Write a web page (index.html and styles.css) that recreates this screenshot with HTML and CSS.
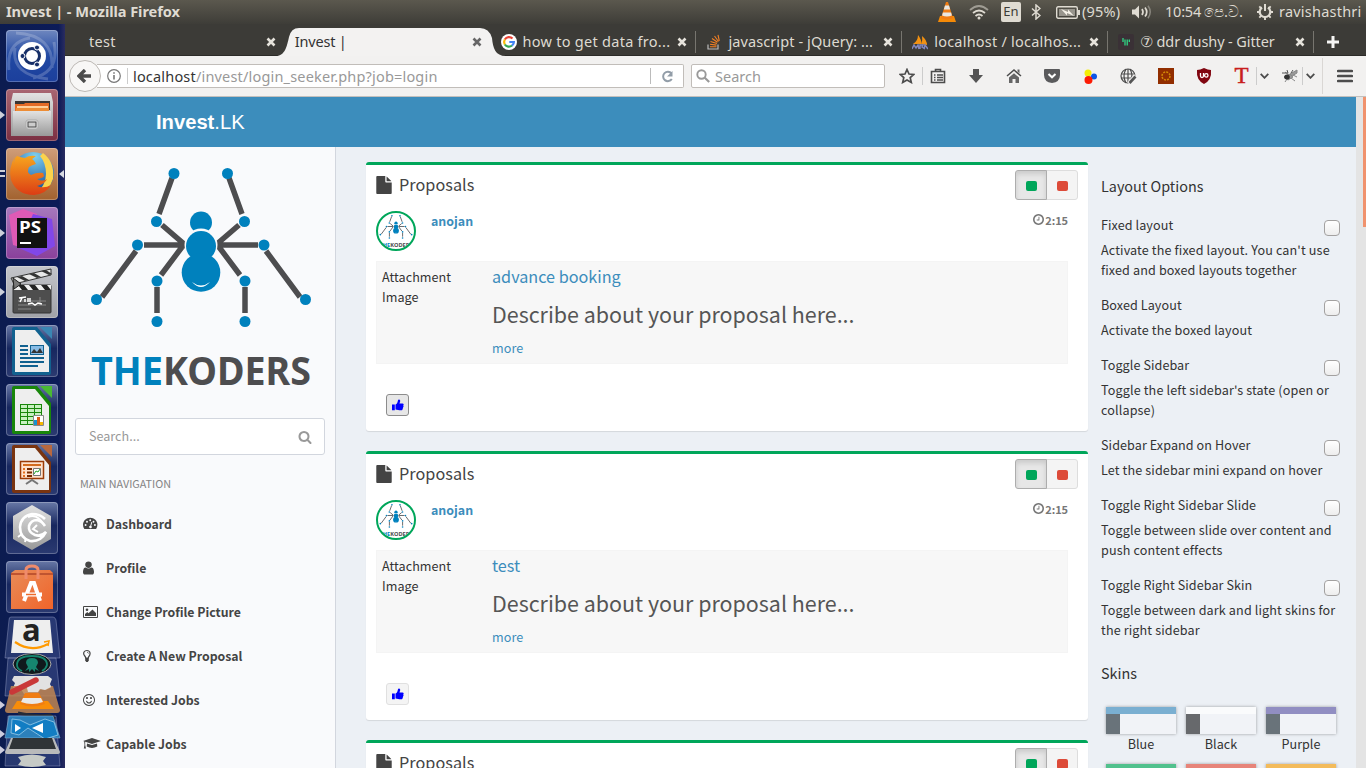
FILE: index.html
```html
<!DOCTYPE html>
<html lang="en">
<head>
<meta charset="utf-8">
<title>Invest |</title>
<link rel="stylesheet" href="styles.css">
</head>
<body>
<svg class="defs" width="0" height="0">
  <defs>
    <symbol id="spider" viewBox="0 0 240 240">
      <g stroke="#4d4d4f" stroke-width="5.500" fill="none">
        <path d="M91 23L78 59M148 23l13 36M81 70l22 19-1 4M158 70l-22 19 1 4M63 90h40M136 90h41M55 96L21 142M185 96l34 46M101 92L80 120M138 92l21 28M76 132v26M164 132v26"/>
      </g>
      <g fill="#0081bd">
        <circle cx="93" cy="18.500" r="5.500"/><circle cx="146.500" cy="18.500" r="5.500"/>
        <circle cx="75.500" cy="66.500" r="5.500"/><circle cx="163.500" cy="66.500" r="5.500"/>
        <circle cx="56.500" cy="90" r="5.500"/><circle cx="183" cy="90" r="5.500"/>
        <circle cx="15.500" cy="144.500" r="5.500"/><circle cx="224.500" cy="144.500" r="5.500"/>
        <circle cx="76" cy="126" r="5.500"/><circle cx="164" cy="126" r="5.500"/>
        <circle cx="76" cy="166.500" r="5.500"/><circle cx="164" cy="166.500" r="5.500"/>
        <circle cx="120" cy="67.500" r="11"/>
      </g>
      <circle cx="120" cy="90" r="16.500" fill="#f9fafc"/>
      <circle cx="120" cy="91" r="15" fill="#0081bd"/><circle cx="120" cy="117.500" r="19.300" fill="#0081bd"/>
      <path d="M111 127q9 7 18 0q-9 10-18 0" fill="#fff"/>
      <text x="10" y="229.500" font-family="'Noto Sans',sans-serif" font-weight="700" font-size="40" textLength="72" lengthAdjust="spacingAndGlyphs" fill="#0081bd">THE</text>
      <text x="82" y="229.500" font-family="'Noto Sans',sans-serif" font-weight="700" font-size="40" textLength="148" lengthAdjust="spacingAndGlyphs" fill="#4d4d4f">KODERS</text>
    </symbol>
    <symbol id="close" viewBox="0 0 10 10"><path d="M1.500 1.500l7 7M8.500 1.500l-7 7" stroke="currentColor" stroke-width="2.600"/></symbol>
    <symbol id="search" viewBox="0 0 1792 1792"><path d="M1216 832q0-185-131.500-316.500t-316.500-131.500-316.500 131.500-131.500 316.500 131.500 316.500 316.500 131.500 316.500-131.500 131.500-316.500zm512 832q0 52-38 90t-90 38q-54 0-90-38l-343-342q-179 124-399 124-143 0-273.500-55.500t-225-150-150-225-55.500-273.500 55.500-273.500 150-225 225-150 273.500-55.500 273.500 55.500 225 150 150 225 55.500 273.500q0 220-124 399l343 343q37 37 37 90z"/></symbol>
    <symbol id="file" viewBox="128 0 1536 1792"><path d="M1152 512v-472q22 14 36 28l408 408q14 14 28 36h-472zm-128 32q0 40 28 68t68 28h544v1056q0 40-28 68t-68 28h-1344q-40 0-68-28t-28-68v-1600q0-40 28-68t68-28h800v544z"/></symbol>
    <symbol id="clock" viewBox="128 128 1536 1536"><path d="M1024 544v448q0 14-9 23t-23 9h-320q-14 0-23-9t-9-23v-64q0-14 9-23t23-9h224v-352q0-14 9-23t23-9h64q14 0 23 9t9 23zm416 352q0-148-73-273t-198-198-273-73-273 73-198 198-73 273 73 273 198 198 273 73 273-73 198-198 73-273zm224 0q0 209-103 385.500t-279.500 279.500-385.500 103-385.500-103-279.500-279.500-103-385.500 103-385.500 279.500-279.500 385.500-103 385.500 103 279.500 279.500 103 385.500z"/></symbol>
    <symbol id="thumb" viewBox="0 0 12 12"><path d="M0 5.500h2.800v5.800H0zM3.500 5.500C5 5 5.700 3 6 1.200 6.200 0 8.200.2 8.200 2c0 1-.6 1.700-.7 2.600h3c1.300 0 1.500 1.400.7 1.900.6.600.4 1.500-.2 1.800.3.700 0 1.300-.5 1.600.2 1-.4 1.400-1.300 1.400-2 .1-3.500-.3-5.700-.8z"/></symbol>
    <linearGradient id="glass" x2="0" y2="1"><stop offset="0" stop-color="#fff" stop-opacity=".42"/><stop offset=".45" stop-color="#fff" stop-opacity=".08"/><stop offset="1" stop-color="#fff" stop-opacity=".16"/></linearGradient>
    <linearGradient id="silver" x2="0" y2="1"><stop offset="0" stop-color="#e2e2e2"/><stop offset="1" stop-color="#999"/></linearGradient>
    <linearGradient id="fox" x2="0" y2="1"><stop offset="0" stop-color="#f7a51e"/><stop offset="1" stop-color="#dc3d14"/></linearGradient>
    <linearGradient id="bag" x2="1" y2="1"><stop offset="0" stop-color="#e98c58"/><stop offset="1" stop-color="#f0642a"/></linearGradient>
    <radialGradient id="globe" cx=".55" cy=".1" r=".9"><stop offset="0" stop-color="#7fd0f0"/><stop offset="1" stop-color="#0b4694"/></radialGradient>
  </defs>
</svg>

<header class="panel">
  <span class="panel-title">Invest | - Mozilla Firefox</span>
  <div class="indicators">
    <svg class="i-vlc" width="18" height="22" viewBox="0 0 18 22"><path d="M2 15h14l2 6H0z" fill="#f58a07"/><path d="M8 1h2l5 16q-6 3-12 0z" fill="#f07c12"/><path d="M7 4.500h4l1.200 4H5.800zM4.900 11.500h8.200l.8 3q-5 2-9.800 0z" fill="#e9e6e0"/></svg>
    <svg class="i-wifi" width="20" height="15" viewBox="0 0 20 15"><g fill="none" stroke="#dfdbd2" stroke-width="1.800"><path d="M1 5q9-8 18 0" opacity=".55"/><path d="M4 8q6-5 12 0M6.500 11q3.500-3 7 0"/></g><circle cx="10" cy="13" r="1.500" fill="#dfdbd2"/></svg>
    <span class="i-en">En</span>
    <svg class="i-bt" width="10" height="16" viewBox="0 0 10 16"><path d="M1 4.500l8 7-4 3.500V1l4 3.500-8 7" fill="none" stroke="#dfdbd2" stroke-width="1.500"/></svg>
    <svg class="i-bat" width="24" height="13" viewBox="0 0 24 13"><rect x=".7" y=".7" width="20.600" height="11.600" rx="1.500" fill="none" stroke="#dfdbd2" stroke-width="1.400"/><path d="M3 3h16v7H3z" fill="#98958d"/><path d="M23 4v5" stroke="#dfdbd2" stroke-width="2"/><path d="M5 3l7 3V3.500L18 10l-7-3v2.500z" fill="#f5f1e8"/></svg>
    <span class="i-pct">(95%)</span>
    <svg class="i-vol" width="20" height="14" viewBox="0 0 20 14"><path d="M0 4.500h3l4-4v13l-4-4H0z" fill="#dfdbd2"/><path d="M10 4q2 3 0 6M13 2.500q3.500 4.500 0 9" fill="none" stroke="#dfdbd2" stroke-width="1.700"/><path d="M16 .8q4.500 6.200 0 12.400" fill="none" stroke="#88857d" stroke-width="1.500"/></svg>
    <span class="i-time">10:54</span><span class="i-ampm" lang="si">පෙ.ව.</span>
    <svg class="i-gear" width="16" height="16" viewBox="0 0 16 16"><g stroke="#dfdbd2" fill="none"><path d="M5 3.500a5.300 5.300 0 1 0 6 0" stroke-width="2.200"/><path d="M8 0v7" stroke-width="2"/><path d="M0 8h3M13 8h3M8 13v3M2.300 2.300l2 2M13.700 2.300l-2 2M2.300 13.700l2-2M13.700 13.700l-2-2" stroke-width="1.900"/></g></svg>
    <span class="i-user">ravishasthri</span>
  </div>
</header>

<div class="desktop">
  <nav class="launcher">
    <div class="tile t-dash"><svg viewBox="0 0 52 52"><path d="M3 40Q0 12 24 8M48 12Q54 42 27 48M10 3q38 2 36 35M42 49Q5 45 9 18" fill="none" stroke="#fff" stroke-width="3" opacity=".2"/><circle cx="26" cy="26" r="14" fill="#fff"/><circle cx="26" cy="26" r="7.500" fill="none" stroke="#172f68" stroke-width="3"/><g fill="#172f68" stroke="#fff"><circle cx="16.500" cy="26" r="2.500"/><circle cx="31" cy="17.500" r="2.500"/><circle cx="31" cy="34.500" r="2.500"/></g></svg></div>
    <div class="tile t-files"><i class="run"></i><svg viewBox="0 0 52 52"><path d="M7 4h38l2 9v34H5V13z" fill="url(#silver)"/><path d="M9 12h35v9H9z" fill="#393532"/><path d="M9 15h9l1-1h24v8H9z" fill="#e46b26"/><path d="M11 17h31v5H11z" fill="#ffd09a"/><path d="M10 19h33v4H10z" fill="#ed8d36"/><path d="M7 22h38v25H7z" fill="url(#silver)"/><rect x="20" y="31" width="12" height="9" rx="2" fill="#e7e7e7" stroke="#aaa"/><rect x="22" y="33" width="8" height="5" fill="#ccc" stroke="#444"/></svg></div>
    <div class="tile t-fox"><i class="run double"></i><i class="focus"></i><svg viewBox="0 0 52 52"><circle cx="27" cy="25" r="21" fill="url(#globe)"/><path d="M37 5q12 9 10 26-4 13-17 15 10-9 10-20 0-11-6-18" fill="#fbd34c"/><path d="M9 8q-7 13-4 24 6 15 23 15 12-1 17-10-7 4-14 1 8-2 10-7-5 3-10 0 6-1 7-3l-1-3q-6-1-12 2-5-3-2-8 3-2 7-3-1-3-4-5l4-3q-7-1-11 2-6-1-8-2-3 2-3 8-1-4 1-8z" fill="url(#fox)"/></svg></div>
    <div class="tile t-ps"><i class="run"></i><svg viewBox="0 0 52 52"><path d="M3 8l14-6 14 5-10 35L7 38z" fill="#df5ab5"/><path d="M27 7l19 5 3 27-18 10-18-8z" fill="#8147e8"/><rect x="11" y="11" width="30" height="30" fill="#111"/><text x="13" y="26" fill="#fff" font-family="Open Sans" font-weight="bold" font-size="16" textLength="22" lengthAdjust="spacingAndGlyphs">PS</text><path d="M14 36h11" stroke="#fff" stroke-width="2"/></svg></div>
    <div class="tile t-clap"><i class="run"></i><svg viewBox="0 0 52 52"><path d="M5 12L45 3v6L8 18z" fill="#e8e8e8" stroke="#333"/><path d="M11 11l8 4 4-1-7-4zM23 8l8 4 4-1-7-4zM35 5l8 4 3-1-6-4z" fill="#333"/><rect x="7" y="19" width="38" height="28" rx="1" fill="#4e4e4e" stroke="#333"/><path d="M8 19h37v5H8z" fill="#eee"/><path d="M12 19h6l4 5h-6zM23 19h6l4 5h-6zM35 19h6l4 5h-6z" fill="#222"/><path d="M7 12l8 6-7 5z" fill="#777" stroke="#222"/><path d="M12 35h28M12 39h28M12 43h13M34 31v8" stroke="#888"/><path d="M13 32l7-1M16 32l-2 4M19 33v3M22 32v4M24 32v4M22 38l4-1 3 2 3-2 4 1" stroke="#fff" stroke-width="1.500" fill="none"/></svg></div>
    <div class="tile t-glass"><svg viewBox="0 0 52 52"><path d="M8 2h23l14 17v29q0 2-2 2H8q-2 0-2-2V4q0-2 2-2z" fill="#11618f"/><path d="M9 5h20l14 17v25H9z" fill="#eee"/><path d="M34 2h12v12z" fill="#3a86b3"/><path d="M14 21h8M14 25h8M14 29h8M14 33h24M14 37h24M14 41h18" stroke="#11618f" stroke-width="2"/><rect x="24.500" y="20.500" width="13" height="9" fill="#88bce5" stroke="#11618f"/><path d="M25 28l3-4 3 3 3-4 3 5z" fill="#333"/></svg></div>
    <div class="tile t-glass"><svg viewBox="0 0 52 52"><path d="M8 2h23l14 17v29q0 2-2 2H8q-2 0-2-2V4q0-2 2-2z" fill="#18860a"/><path d="M9 5h20l14 17v25H9z" fill="#eee"/><path d="M34 2h12v12z" fill="#49b933"/><path d="M14 20h22v21H14z" fill="#c8f0c0"/><path d="M14.500 20v21M21.500 20v21M28.500 20v21M35.500 20v21M14 20.500h22M14 24.500h22M14 28.500h22M14 32.500h22M14 36.500h22M14 40.500h22" stroke="#18860a"/><path d="M27.500 31.500h10v10h-10z" fill="#fff" stroke="#888"/><path d="M28 36h3v5h-3z" fill="#1793d1"/><path d="M31 33h3v8h-3z" fill="#dd5c16"/><path d="M34 38h3v3h-3z" fill="#f5b800"/></svg></div>
    <div class="tile t-glass"><svg viewBox="0 0 52 52"><path d="M8 2h23l14 17v29q0 2-2 2H8q-2 0-2-2V4q0-2 2-2z" fill="#7a3410"/><path d="M9 5h20l14 17v25H9z" fill="#eee"/><path d="M34 2h12v12z" fill="#b8683f"/><path d="M14.500 18.500h23v17h-23z" fill="#ffe2cd" stroke="#9b3b07" stroke-width="1.500"/><path d="M17 22h18" stroke="#d36b1e" stroke-width="2"/><path d="M17 26h2M17 29.500h2M17 33h2" stroke="#e46e1e" stroke-width="2"/><path d="M21 26h5M21 29.500h5M21 33h5" stroke="#7a2b00" stroke-width="2"/><path d="M27.500 25.500h7v7h-7z" fill="#fff" stroke="#777"/><path d="M28 31l2-3 2 1 2-3" stroke="#27a52c" fill="none"/><path d="M20 41l6-4 6 4" stroke="#777" stroke-width="2" fill="none"/></svg></div>
    <div class="tile t-glass"><svg viewBox="0 0 52 52"><path d="M26 3l19 11v23L26 48 7 37V14z" fill="url(#silver)"/><path d="M39 17q-5-5-13-5-11 2-12 13 0 11 10 14 11 1 16-9-5 5-11 3-7-3-6-9 2-6 8-6 5 1 8 6" fill="none" stroke="#fff" stroke-width="2.600"/><path d="M16 32l-4 3M20 36l-1 4M22 15q9-4 16 8M31 23l-4 4 5 3" fill="none" stroke="#fff" stroke-width="2"/></svg></div>
    <div class="tile t-glass"><svg viewBox="0 0 52 52"><path d="M5 12l4-3h35l3 3v36H5z" fill="url(#bag)"/><path d="M5 12h42v2H5z" fill="#bf5430"/><path d="M20 18V9q0-4 6-4t6 4v9" fill="none" stroke="#ef8b6c" stroke-width="3"/><path d="M18 40l7-18h3l6 18M16 33.500h20" fill="none" stroke="#fff" stroke-width="4"/><path d="M20 33.500h10" stroke="#ed6b2b" stroke-width="1.500"/></svg></div>
    <svg class="stack" width="65" height="152" viewBox="0 0 65 152">
      <g fill="#5f70a8" fill-opacity=".35" stroke="#a9b2d2" stroke-opacity=".4"><path d="M11 1h42q2 0 3 3l4 38H5L9 4q0-3 2-3z"/><path d="M8 42h48l4 38H5z"/><path d="M8 100h48l4 50H5z"/></g>
      <path d="M14 4h36l3 33H11z" fill="#eee"/><text x="22" y="25" font-family="Open Sans" font-weight="bold" font-size="31" fill="#222">a</text><path d="M15 26q16 11 33 2" fill="none" stroke="#ff9900" stroke-width="2.200"/><path d="M44 26l5-1-1 5" fill="none" stroke="#f90" stroke-width="1.500"/>
      <ellipse cx="32" cy="48" rx="19" ry="10.500" fill="#10191c" stroke="#aaa"/><path d="M17 49q0-9 15-9t15 9q-1 4-5 6M22 55q-5-2-5-6" fill="none" stroke="#16856f" stroke-width="1.800"/><path d="M26 47q0-5 6-5t6 5l-2 4 3 4-4-2v3l-3-3-3 3v-3l-4 2 3-4z" fill="#16856f"/>
      <path d="M14 60h33l4 3-2 5 3 3-6 3-5-1-4 5H24l-3-5-8-1 2-5-3-3z" fill="#dedede"/>
      <path d="M11 70h42l7 24q0 3-3 3H8q-3 0-3-3z" fill="#c18652" fill-opacity=".85"/><path d="M24 60h24l4 3-2 5 1 3-6 3-5-1-2 3H28z" fill="#e2e2e2"/><path d="M12 76l24-12" stroke="#c93838" stroke-width="5.500" stroke-linecap="round"/><path d="M17 85h31l6 8H12z" fill="#f78d0a"/><path d="M25 77h14l6 11q-13 5-25 0z" fill="#f07d13"/><path d="M23 82h18l2 4q-11 4-22 0z" fill="#e9e9e9"/>
      <path d="M18 97q20 4 32 2l5 4" stroke="#262b38" stroke-width="3" fill="none"/>
      <path d="M9 100h44l7 22H5z" fill="#2c80bb" stroke="#8fb9d8" stroke-opacity=".5"/><path d="M12 103l8 1 10 5 15-6 9 3 4 13-13 4-17-11-9 7-8-2z" fill="#127dc3" stroke="#9acbe9" stroke-width=".8"/><path d="M15 108l6 4-6 4zM43 107v10l-11-5z" fill="#fff"/>
      <path d="M11 122h43l6 14q0 2-2 2H7q-2 0-2-2z" fill="#b9babb"/><path d="M13 122h39l4 11H9z" fill="#303437"/>
      <path d="M18 141q14-5 28 0l-3 4 3 4q-14 4-28 0l3-4z" fill="#c6cac6"/>
      <path d="M0 85l5 4-5 4zM0 114l5 4-5 4zM0 130l5 4-5 4z" fill="#ccd"/>
    </svg>
  </nav>

  <div class="browser">
    <div class="tabs">
      <div class="tab first"><span class="tt w1">test</span><svg class="x"><use href="#close"/></svg></div>
      <div class="tab active">
        <svg class="shape" width="230" height="28" viewBox="0 0 230 28"><path d="M0 28C9 28 11 18 13 9Q15 0 23 0H204Q213 0 216 10C217 20 219 28 230 28z" fill="#f3f2f1"/></svg>
        <span class="tt w2">Invest |</span><svg class="x"><use href="#close"/></svg></div>
      <div class="tab sep"><svg class="fav" viewBox="0 0 16 16"><circle cx="8" cy="8" r="8" fill="#fff"/><g fill="none" stroke-width="2.200"><path d="M11.500 4.600A4.900 4.900 0 0 0 3.800 5.500" stroke="#ea4335"/><path d="M3.800 5.500a5 5 0 0 0 0 5" stroke="#fbbc05"/><path d="M3.800 10.500a4.900 4.900 0 0 0 7.200 1" stroke="#34a853"/><path d="M8.300 8h4.600q0 2.200-1.900 3.500" stroke="#4285f4"/></g></svg><span class="tt w3">how to get data fro...</span><svg class="x"><use href="#close"/></svg></div>
      <div class="tab sep"><svg class="fav" viewBox="0 0 16 16"><path d="M2 10.500V15h10v-4.500" fill="none" stroke="#bbb" stroke-width="1.200"/><path d="M4 12.800h6.500M4 10.300l6.500.8M4.500 7.500l6.500 2M6 4.500l5.500 3.700M8.500 2l4 5.500M12 .8l1.300 6" stroke="#f48024" stroke-width="1.100"/></svg><span class="tt w4">javascript - jQuery: ...</span><svg class="x"><use href="#close"/></svg></div>
      <div class="tab sep"><svg class="fav" viewBox="0 0 16 16"><path d="M1 10q5-3 5-9 4 5 3 9zM9 10q2-4 1-8 5 4 5 9z" fill="#f29111"/><path d="M0 15l2-4 2 3 2-3 1 4M8 15v-4h3l-1 2 3 2M12 15l1-4 3 4" fill="none" stroke="#8287bd" stroke-width="1.500"/></svg><span class="tt w5">localhost / localhos...</span><svg class="x"><use href="#close"/></svg></div>
      <div class="tab sep"><svg class="fav" viewBox="0 0 16 16"><rect width="16" height="16" rx="2" fill="#3a3136"/><path d="M5 4v4M7 5.500v6M9.200 5.500v6M11.300 5.500V8" stroke="#2fe28c" stroke-width="1.200"/></svg><span class="tt w6">⑦ ddr dushy - Gitter</span><svg class="x"><use href="#close"/></svg></div>
      <svg class="plus" width="14" height="14" viewBox="0 0 14 14"><path d="M7 1v12M1 7h12" stroke="#f5f5f4" stroke-width="3"/></svg>
    </div>

    <div class="toolbar">
      <div class="back"><svg width="16" height="14" viewBox="0 0 16 14"><path d="M8 1L2 7l6 6M2.500 7H14" fill="none" stroke="#4c4c4c" stroke-width="3.400"/></svg></div>
      <div class="url">
        <svg width="14" height="14" viewBox="0 0 14 14"><circle cx="7" cy="7" r="6.300" fill="none" stroke="#777" stroke-width="1.200"/><path d="M7 6v4.500M7 3.200v1.600" stroke="#777" stroke-width="1.600"/></svg>
        <span class="addr"><b>localhost</b>/invest/login_seeker.php?job=login</span>
        <span class="reload"><svg width="13" height="13" viewBox="0 0 13 13"><path d="M10.500 3.500A4.700 4.700 0 1 0 10.800 9" fill="none" stroke="#929da8" stroke-width="2"/><path d="M11.500 1v5.500H6z" fill="#929da8"/></svg></span>
      </div>
      <div class="find"><svg width="14" height="14" viewBox="0 0 14 14"><circle cx="5.500" cy="5.500" r="4.200" fill="none" stroke="#999" stroke-width="1.900"/><path d="M8.500 8.500l4.700 4.500" stroke="#999" stroke-width="2.200"/></svg><span>Search</span></div>
      <div class="tools">
        <span class="slot star"><svg width="16" height="16" viewBox="0 0 16 16"><path d="M8 1.500l2 4.500 4.800.4-3.600 3.200 1.100 4.800L8 11.900l-4.300 2.500 1.100-4.800L1.200 6.400 6 6z" fill="none" stroke="#4c4c4c" stroke-width="1.700"/></svg></span>
        <span class="slot list"><svg width="16" height="16" viewBox="0 0 16 16"><path d="M1.500 3.500h13v11h-13zM5.500 3V1.500h5V3M4 7h1.500M7 7h6M4 9.500h1.500M7 9.500h6M4 12h1.500M7 12h6" fill="none" stroke="#4c4c4c" stroke-width="1.600"/></svg></span>
        <span class="slot"><svg width="16" height="16" viewBox="0 0 16 16"><path d="M5 1h6v6h4l-7 8-7-8h4z" fill="#555"/></svg></span>
        <span class="slot"><svg width="16" height="16" viewBox="0 0 16 16"><path d="M1 8l7-6 7 6" fill="none" stroke="#4c4c4c" stroke-width="1.500"/><path d="M11.500 1.500h2v4l-2-2zM3 9.500l5-4.300 5 4.300V15H9.500v-4h-3v4H3z" fill="#666"/></svg></span>
        <span class="slot"><svg width="16" height="16" viewBox="0 0 16 16"><path d="M0 2q0-1 1-1h14q1 0 1 1v5q0 7-8 8-8-1-8-8z" fill="#5a5a5c"/><path d="M4.500 6L8 9.300 11.500 6" fill="none" stroke="#fff" stroke-width="2"/></svg></span>
        <span class="slot"><svg width="16" height="16" viewBox="0 0 16 16"><circle cx="12" cy="8.500" r="3" fill="#0b57e8"/><circle cx="6" cy="5" r="3.500" fill="#f4ed05"/><circle cx="6.500" cy="12" r="4" fill="#fc1b04"/></svg></span>
        <span class="slot"><svg width="17" height="17" viewBox="0 0 17 17"><g fill="none" stroke="#4c4c4c" stroke-width="1.200"><circle cx="8" cy="8" r="7"/><path d="M1 6h14M1 10h13M6 1q-4 7 0 14M10 1q4 7 0 12M8 1v14"/></g><path d="M16 8l-7 8" stroke="#f2f1f0" stroke-width="5"/><path d="M15.500 8.500l-6 6.500" stroke="#555" stroke-width="2.700"/></svg></span>
        <span class="slot"><svg width="16" height="16" viewBox="0 0 16 16"><path d="M0 0h16v16H0z" fill="#922e00"/><circle cx="8" cy="8" r="4" fill="none" stroke="#d38706" stroke-width="1.500" stroke-dasharray="2 1.100"/></svg></span>
        <span class="slot"><svg width="16" height="16" viewBox="0 0 16 16"><path d="M8 0q4 2 7 2 1 10-7 14Q0 12 1 2q3 0 7-2z" fill="#800610"/><path d="M4.500 5v3q0 1.500 1.500 1.500T7.500 8V5" fill="none" stroke="#fff" stroke-width="1.300"/><circle cx="10.300" cy="7.400" r="1.700" fill="none" stroke="#fff" stroke-width="1.300"/></svg></span>
        <span class="slot tee">T</span>
        <span class="chev"><svg width="9" height="6" viewBox="0 0 9 6"><path d="M.7.8l3.800 4 3.800-4" fill="none" stroke="#4c4c4c" stroke-width="1.800"/></svg></span>
        <span class="slot fly"><svg width="17" height="14" viewBox="0 0 17 14"><path d="M2 8l5-3 4 3-5 3zM8 5l7-4v3l-5 3zM3 3l4 3M9 9l4 3M5 10l-2 3M11 6l4 2" stroke="#888" fill="#999"/><ellipse cx="5" cy="8" rx="2.800" ry="2.500" fill="#333"/><path d="M0 4h6M6 4L5 1M9 4l2-3" stroke="#555"/></svg></span>
        <span class="chev c2"><svg width="9" height="6" viewBox="0 0 9 6"><path d="M.7.8l3.800 4 3.800-4" fill="none" stroke="#4c4c4c" stroke-width="1.800"/></svg></span>
        <span class="menu"><svg width="16" height="14" viewBox="0 0 16 14"><path d="M1.200 2h13.600M1.200 7h13.600M1.200 12h13.600" stroke="#4c4c4c" stroke-width="2.700" stroke-linecap="round"/></svg></span>
      </div>
    </div>

    <div class="viewport">
      <div class="page">
        <div class="navbar"><span><b>Invest</b>.LK</span></div>
        <div class="columns">
          <aside class="sidebar">
            <svg class="logo" width="240" height="240"><use href="#spider"/></svg>
            <div class="side-search"><span>Search...</span><svg width="14" height="14"><use href="#search"/></svg></div>
            <div class="nav-head">MAIN NAVIGATION</div>
            <div class="nav"><svg width="15" height="14" viewBox="0 0 15 14"><path d="M1.300 12Q0 10 0 7.800C0 4 3.200.8 7.200.8s7.200 3.200 7.200 7q0 2.200-1.300 4.200z"/><g fill="#f9fafc"><circle cx="2.600" cy="8" r=".95"/><circle cx="4" cy="4.700" r=".95"/><circle cx="7.200" cy="3.200" r=".95"/><circle cx="10.500" cy="4.700" r=".95"/><circle cx="11.900" cy="8" r=".95"/><path d="M8.300 5l.9.200-1 3.700q.9.500.7 1.400-.4 1.100-1.600 1-1.300-.3-1.200-1.500.2-1 1.200-1.100z"/></g></svg>Dashboard</div>
            <div class="nav"><svg width="11" height="14" viewBox="256 128 1280 1536"><path d="M1536 1399q0 109-62.500 187t-150.500 78h-854q-88 0-150.500-78t-62.500-187q0-85 8.500-160.500t31.500-152 58.500-131 94-89 134.500-34.500q131 128 313 128t313-128q76 0 134.500 34.500t94 89 58.500 131 31.500 152 8.500 160.500zm-256-887q0 159-112.500 271.500t-271.500 112.500-271.500-112.500-112.500-271.500 112.500-271.500 271.500-112.500 271.500 112.500 112.500 271.500z"/></svg>Profile</div>
            <div class="nav"><svg width="15" height="12" viewBox="0 0 15 12"><path d="M.5.500h14v11H.5z" fill="none" stroke="#444"/><circle cx="4" cy="3.700" r="1.300"/><path d="M2 10V8l2.300-2 1.200 1.200L9.500 3.500 13 7v3z"/></svg>Change Profile Picture</div>
            <div class="nav"><svg width="8" height="14" viewBox="0 0 8 14"><path d="M2.700 9Q2.500 7.700 1.400 6.500C-.3 4 1.300 1.500 4 1.500S7.700 4 6.600 6.500Q5.500 7.700 5.300 9z" fill="none" stroke="#444" stroke-width="1.200"/><path d="M2.200 9h3.600v2.500L4.800 13H3.200L2.200 11.500z"/><path d="M4 3.200q1.300 0 1.500 1.300" stroke="#444" stroke-width=".7" fill="none"/></svg>Create A New Proposal</div>
            <div class="nav"><svg width="12" height="12" viewBox="128 128 1536 1536"><path d="M1262 1075q-37 121-138 195t-228 74-228-74-138-195q-8-25 4-48.500t38-31.500q25-8 48.500 4t31.500 38q25 80 92.500 129.500t151.500 49.500 151.500-49.500 92.500-129.500q8-26 32-38t49-4 37 31.500 4 48.500zm-494-435q0 53-37.500 90.500t-90.500 37.500-90.500-37.500-37.500-90.500 37.500-90.500 90.500-37.500 90.500 37.500 37.500 90.500zm512 0q0 53-37.500 90.500t-90.500 37.500-90.500-37.500-37.500-90.500 37.500-90.500 90.500-37.500 90.500 37.500 37.500 90.500zm256 256q0-130-51-248.500t-136.500-204-204-136.500-248.500-51-248.500 51-204 136.500-136.500 204-51 248.500 51 248.500 136.500 204 204 136.500 248.500 51 248.500-51 204-136.500 136.500-204 51-248.500zm128 0q0 209-103 385.500t-279.500 279.500-385.500 103-385.500-103-279.500-279.500-103-385.500 103-385.500 279.500-279.500 385.500-103 385.500 103 279.500 279.500 103 385.500z"/></svg>Interested Jobs</div>
            <div class="nav"><svg width="18" height="14" viewBox="0 0 18 14"><path d="M9 1l9 3-9 3-9-3zM4 6.400l5 1.600 5-1.600.3 3.200Q9 12.500 3.700 9.600zM1.200 4.500h1V8l.8 3.500H.8L1.500 8z"/></svg>Capable Jobs</div>
          </aside>

          <main class="content">
            <section class="box">
              <div class="box-head"><svg width="16" height="18"><use href="#file"/></svg><span class="box-title">Proposals</span><div class="btns"><span class="btn on"><i class="sq green"></i></span><span class="btn"><i class="sq red"></i></span></div></div>
              <div class="post"><span class="avatar"><svg width="36" height="36"><use href="#spider"/></svg></span><span class="name">anojan</span><span class="when"><svg width="11" height="11"><use href="#clock"/></svg>2:15</span></div>
              <div class="attach"><div class="att-img">Attachment Image</div><div class="att-body"><h4>advance booking</h4><p>Describe about your proposal here...</p><span class="more">more</span></div></div>
              <span class="like pressed"><svg width="12" height="12"><use href="#thumb"/></svg></span>
            </section>
            <section class="box">
              <div class="box-head"><svg width="16" height="18"><use href="#file"/></svg><span class="box-title">Proposals</span><div class="btns"><span class="btn on"><i class="sq green"></i></span><span class="btn"><i class="sq red"></i></span></div></div>
              <div class="post"><span class="avatar"><svg width="36" height="36"><use href="#spider"/></svg></span><span class="name">anojan</span><span class="when"><svg width="11" height="11"><use href="#clock"/></svg>2:15</span></div>
              <div class="attach"><div class="att-img">Attachment Image</div><div class="att-body"><h4>test</h4><p>Describe about your proposal here...</p><span class="more">more</span></div></div>
              <span class="like"><svg width="12" height="12"><use href="#thumb"/></svg></span>
            </section>
            <section class="box">
              <div class="box-head"><svg width="16" height="18"><use href="#file"/></svg><span class="box-title">Proposals</span><div class="btns"><span class="btn on"><i class="sq green"></i></span><span class="btn"><i class="sq red"></i></span></div></div>
            </section>
          </main>

          <aside class="options">
            <h3>Layout Options</h3>
            <div class="opt"><label>Fixed layout<i></i></label><p>Activate the fixed layout. You can't use<br>fixed and boxed layouts together</p></div>
            <div class="opt"><label>Boxed Layout<i></i></label><p>Activate the boxed layout</p></div>
            <div class="opt"><label>Toggle Sidebar<i></i></label><p>Toggle the left sidebar's state (open or<br>collapse)</p></div>
            <div class="opt"><label>Sidebar Expand on Hover<i></i></label><p>Let the sidebar mini expand on hover</p></div>
            <div class="opt"><label>Toggle Right Sidebar Slide<i></i></label><p>Toggle between slide over content and<br>push content effects</p></div>
            <div class="opt"><label>Toggle Right Sidebar Skin<i></i></label><p>Toggle between dark and light skins for<br>the right sidebar</p></div>
            <h3 class="skins-title">Skins</h3>
            <div class="skins">
              <div class="skin blue"><div class="swatch"><i></i></div>Blue</div>
              <div class="skin black"><div class="swatch"><i></i></div>Black</div>
              <div class="skin purple"><div class="swatch"><i></i></div>Purple</div>
              <div class="skin green2"><div class="swatch"><i></i></div></div>
              <div class="skin red2"><div class="swatch"><i></i></div></div>
              <div class="skin yellow"><div class="swatch"><i></i></div></div>
            </div>
          </aside>
        </div>
      </div>
      <div class="scrollbar"><div class="knob"></div></div>
    </div>
  </div>
</div>
</body>
</html>
```
FILE: styles.css
```css
* { box-sizing: border-box; }
body { margin: 0; width: 1366px; height: 768px; overflow: hidden; font-family: "Noto Sans CJK SC", sans-serif; font-size: 12.6px; line-height: 20px; color: #333; background: #ecf0f5; }
svg { display: block; flex: none; }
.defs { position: absolute; }
h3, h4, p { margin: 0; font-weight: 400; }

/* system panel */
.panel { height: 24px; display: flex; justify-content: space-between; align-items: center; background: linear-gradient(#5b584e, #3e3d38); color: #dfdbd2; font-family: "Noto Sans", sans-serif; font-size: 14.5px; line-height: 22px; white-space: nowrap; }
.panel span { height: 24px; }
.panel-title { padding-left: 6px; font-weight: 700; font-size: 14.6px; letter-spacing: -.07px; }
.indicators { display: flex; align-items: center; height: 24px; width: 428px; }
.i-vlc { margin-right: 13px; }
.i-wifi { margin-right: 12px; }
.panel .i-en { width: 20px; height: 20px; border-radius: 2px; background: #dfdbd2; color: #3c3b37; font-size: 13px; line-height: 19px; text-align: center; margin-right: 10px; }
.i-bt { margin-right: 15px; }
.i-bat { margin-right: 2px; }
.i-pct { width: 50px; letter-spacing: .2px; }
.i-vol { margin-right: 13px; }
.i-time { width: 39px; letter-spacing: -.2px; }
.i-ampm { width: 53px; font-size: 15px; }
.i-gear { margin-right: 6px; }
.i-user { letter-spacing: .22px; }

.desktop { display: flex; height: 744px; }

/* launcher */
.launcher { width: 65px; flex: none; height: 744px; padding: 6px 0 0 6px; display: flex; flex-direction: column; gap: 7px; background: linear-gradient(90deg, #0c1c50, #0c1b58 90%, #2a2c60); }
.tile { position: relative; width: 52px; height: 52px; flex: none; border-radius: 4px; box-shadow: inset 0 0 0 1px rgba(255,255,255,.25); }
.tile > svg { width: 52px; height: 52px; }
.t-dash { background: linear-gradient(#6f87bf, #2149a3 50%, #1c3f9c); }
.t-files { background: linear-gradient(#a96672, #7b2f42); }
.t-fox { background: linear-gradient(#cf9d79, #a2622f); }
.t-ps { background: linear-gradient(#a679bd, #8a409b); }
.t-clap { background: linear-gradient(#c4c5ca, #a0a2a8); }
.t-glass { background: linear-gradient(#6878a6, #17275f 45%, #2b3a71); }
.run { position: absolute; left: -6px; top: 22px; border: 4px solid transparent; border-left: 5px solid #ccd0da; border-right: 0; }
.run.double { border: 0; width: 5px; height: 7px; border-top: 2px solid #ccd0da; border-bottom: 2px solid #ccd0da; }
.focus { position: absolute; left: 53px; top: 22px; border: 4px solid transparent; border-right: 5px solid #d8dae2; border-left: 0; }
.stack { margin-left: -6px; margin-top: -4px; }

/* browser chrome */
.browser { width: 1301px; display: flex; flex-direction: column; }
.tabs { height: 32px; display: flex; background: #3c3b37; border-bottom: 1px solid #2c2b28; padding-left: 14px; font-family: "Noto Sans", sans-serif; font-size: 14.5px; color: #dedad1; }
.tab { position: relative; width: 205.8px; display: flex; align-items: center; height: 36px; padding: 0 9px 0 10px; flex: none; }
.tab .x { position: relative; width: 10px; height: 10px; margin-left: auto; color: #e6e3dc; }
.tt { position: relative; white-space: nowrap; line-height: 34px; height: 36px; }
.tab.sep { background: linear-gradient(#77756f, #77756f) right 7px / 1px 22px no-repeat; }
.tab.active { color: #333; }
.tab.active .x { color: #666; }
.shape { position: absolute; left: -9px; top: 4px; }
.fav { width: 16px; height: 16px; margin-right: 6px; }
.w1 { letter-spacing: .3px; }
.w2 { letter-spacing: -.2px; }
.w3 { letter-spacing: .27px; }
.w4 { letter-spacing: .1px; }
.w5 { letter-spacing: .22px; }
.w6 { letter-spacing: -.1px; }
.plus { margin: 11px 0 0 12px; }
.toolbar { height: 41px; display: flex; align-items: center; background: #f2f1f0; border-bottom: 1px solid #c3c0bd; font-family: "Noto Sans", sans-serif; font-size: 14.5px; }
.back { position: relative; z-index: 1; width: 32px; height: 32px; margin-left: 4px; border: 1px solid #bdb9b5; border-radius: 50%; background: #f8f7f6; display: flex; align-items: center; justify-content: center; }
.url { width: 587px; height: 24px; margin-left: -4px; border: 1px solid #c1bdb9; border-left: 0; border-radius: 0 2px 2px 0; background: #fff; display: flex; align-items: center; padding-left: 10px; color: #999; }
.addr { border-left: 1px solid #ccc; margin-left: 6px; padding-left: 5px; height: 16px; line-height: 16px; flex: 1; letter-spacing: .18px; white-space: nowrap; }
.addr b { color: #333; font-weight: 400; }
.reload { width: 33px; height: 16px; border-left: 1px solid #bbb; display: flex; align-items: center; justify-content: center; }
.find { width: 194px; height: 24px; margin-left: 7px; border: 1px solid #c1bdb9; border-radius: 2px; background: #fff; display: flex; align-items: center; gap: 5px; padding-left: 4px; color: #999; }
.tools { display: flex; align-items: center; height: 40px; flex: 1; }
.slot { width: 38px; display: flex; justify-content: center; }
.star { width: 38px; padding-left: 6px; border-right: 1px solid #ccc; height: 18px; align-items: center; }
.list { width: 34px; padding-right: 4px; }
.tee { width: 33px; padding-left: 4px; color: #c81e1e; font: 23px/20px "Liberation Serif", serif; -webkit-text-stroke: .5px #c81e1e; }
.chev { width: 16px; height: 18px; border-left: 1px solid #ccc; display: flex; align-items: center; justify-content: center; }
.fly { width: 30px; padding-left: 6px; }
.c2 { width: 20px; padding-right: 4px; }
.menu { flex: 1; height: 36px; border-left: 1px solid #dad7d4; display: flex; align-items: center; justify-content: center; }

/* page */
.viewport { height: 671px; display: flex; overflow: hidden; }
.page { width: 1291px; height: 671px; overflow: hidden; background: #ecf0f5; }
.scrollbar { width: 10px; background: #e4e4e4; display: flex; justify-content: flex-end; }
.knob { width: 3px; height: 130px; background: #f0926d; }
.navbar { height: 50px; background: #3c8dbc; padding-left: 91px; color: #fff; font: 20.2px/50px "Liberation Sans", Arial, sans-serif; }
.columns { display: flex; height: 970px; }
.sidebar { width: 271px; flex: none; background: #f9fafc; border-right: 1px solid #d2d6de; }
.logo { margin: 8px 0 0 16px; }
.side-search { margin: 23px 10px 18px; height: 37px; border: 1px solid #d2d6de; border-radius: 3px; background: #fff; display: flex; align-items: center; justify-content: space-between; padding: 0 12px 0 13px; color: #999; fill: #999; line-height: 18px; }
.side-search span { padding-bottom: 2px; }
.nav-head { height: 20px; padding-left: 15px; margin-bottom: 9px; font-size: 10.8px; color: #848484; }
.nav { display: grid; grid-template-columns: 23px 1fr; align-items: center; height: 44px; padding-left: 18px; color: #444; fill: #444; font-weight: 700; font-size: 12.3px; }
.content { width: 752px; flex: none; padding: 15px 0 0 30px; }
.box { width: 722px; height: 269px; margin-bottom: 20px; background: #fff; border-top: 3px solid #00a65a; border-radius: 3px; box-shadow: 0 1px 1px rgba(0,0,0,.1); }
.box-head { display: flex; align-items: center; height: 40px; padding: 0 10px; fill: #444; color: #444; }
.box-title { font-size: 16.2px; margin-left: 7px; flex: 1; padding-bottom: 2px; letter-spacing: .05px; }
.btns { display: flex; }
.btn { width: 32px; height: 30px; display: flex; align-items: center; justify-content: center; border: 1px solid #ddd; background: #f4f4f4; border-radius: 0 3px 3px 0; margin-left: -1px; }
.btn.on { position: relative; background: #e7e7e7; border-color: #adadad; border-radius: 3px 0 0 3px; box-shadow: inset 0 3px 5px rgba(0,0,0,.125); }
.sq { width: 11px; height: 10px; border-radius: 2px; margin-top: 1px; }
.green { background: #00a65a; }
.red { background: #dd4b39; }
.post { display: flex; height: 50px; padding: 6px 20px 0 10px; }
.avatar { width: 40px; height: 40px; flex: none; border: 2px solid #00a65a; border-radius: 50%; overflow: hidden; }
.name { flex: 1; margin-left: 15px; color: #3c8dbc; font-weight: 700; font-size: 12.4px; }
.when { display: flex; align-items: center; gap: 1px; height: 17px; color: #777; fill: #777; font-size: 11px; font-weight: 700; letter-spacing: -.1px; }
.attach { margin: 6px 20px 0 10px; height: 103px; display: flex; padding: 5px; border: 1px solid #f4f4f4; background: #f7f7f7; }
.att-img { width: 110px; padding-right: 30px; letter-spacing: .05px; }
.att-body { color: #555; }
.att-body h4 { color: #3c8dbc; font-size: 16.2px; line-height: 20px; margin-top: -1px; }
.att-body p { font-size: 21.45px; line-height: 36px; padding-top: 10px; height: 52px; }
.more { color: #3c8dbc; letter-spacing: .1px; }
.like { display: flex; align-items: center; justify-content: center; width: 23px; height: 22px; margin: 30px 0 0 20px; border: 1px solid #e0e0e0; border-radius: 3px; background: #f4f4f4; fill: #00f; }
.like.pressed { background: #e7e7e7; border-color: #8c8c8c; }
.options { padding: 29px 0 0 13px; width: 260px; }
.options h3 { font-size: 14.4px; line-height: 20px; margin-bottom: 19px; }
.opt { padding-bottom: 15px; white-space: nowrap; letter-spacing: .13px; }
.opt label { display: flex; justify-content: space-between; height: 20px; margin-bottom: 5px; letter-spacing: .08px; }
.opt i { width: 16px; height: 16px; margin: 5px 8px 0 0; border: 1px solid #a3a1a0; border-radius: 4px; background: linear-gradient(#fff, #ededed); }
.options .skins-title { margin: 8px 0 24px; }
.skins { display: grid; grid-template-columns: repeat(3, 80px); }
.skin { height: 57px; padding: 0 5px; text-align: center; }
.swatch { width: 70px; height: 27px; display: flex; align-items: flex-end; background: #f1f3f7; border-top: 7px solid; box-shadow: 0 0 3px rgba(0,0,0,.35); }
.swatch i { width: 14px; height: 20px; background: #69737a; }
.blue .swatch { border-top-color: #7aafd1; }
.black .swatch { border-top-color: #fafbfc; }
.black .swatch i { background: #67696c; }
.purple .swatch { border-top-color: #918ec2; }
.green2 .swatch { border-top-color: #51c18d; }
.red2 .swatch { border-top-color: #e78479; }
.yellow .swatch { border-top-color: #f3bb5b; }
```
